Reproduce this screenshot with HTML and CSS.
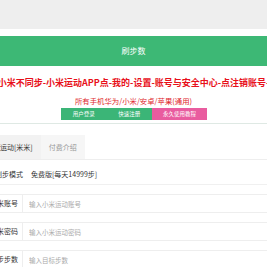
FILE: index.html
```html
<!DOCTYPE html>
<html lang="zh-CN">
<head>
    <meta charset="UTF-8">
    <meta name="viewport" content="width=device-width, initial-scale=1.0">
    <title>刷步数</title>
    <link rel="stylesheet" href="styles.css">
</head>
<body>

    <!-- top gray strip -->
    <div class="topbar"></div>

    <!-- title bar -->
    <div class="title-bar">刷步数</div>

    <!-- notice -->
    <div class="notice">
        <p class="warn">小米不同步-小米运动APP点-我的-设置-账号与安全中心-点注销账号-</p>
        <p class="sub">所有手机华为/小米/安卓/苹果(通用)</p>
        <div class="links">
            <a class="btn btn-green">用户登录</a>
            <a class="btn btn-green">快速注册</a>
            <a class="btn btn-pink">永久使用教程</a>
        </div>
    </div>
    <div class="divider"></div>

    <!-- tabs + form -->
    <div class="panel">
        <div class="tabs">
            <span class="tab tab-on">小米运动[米米]</span>
            <span class="tab">付费介绍</span>
        </div>

        <div class="mode-row">
            <span class="mode-label">刷步模式</span>
            <span class="mode-value">免费版[每天14999步]</span>
        </div>

        <div class="form-row">
            <label class="form-label">小米账号</label>
            <input class="form-input" type="text" placeholder="输入小米运动账号">
        </div>
        <div class="form-row">
            <label class="form-label">小米密码</label>
            <input class="form-input" type="password" placeholder="输入小米运动密码">
        </div>
        <div class="form-row">
            <label class="form-label">刷步步数</label>
            <input class="form-input" type="text" placeholder="输入目标步数">
        </div>
    </div>

</body>
</html>
```

FILE: styles.css
```css
/* --- Page --- */
body {
    margin: 0; padding: 0;
    background: #fff;
    font-family: "Noto Sans CJK SC", "Noto Sans", sans-serif;
    color: #333;
    overflow: hidden;
}

.topbar {
    height: 29px;
    background: #eeeeee;
}

/* --- Title bar --- */
.title-bar {
    margin-top: 7px;
    height: 30px; line-height: 30px;
    background: #3db875;
    color: #fff;
    font-size: 8px;
    text-align: center;
}

/* --- Notice block --- */
.notice {
    display: flex; flex-direction: column; align-items: center;
}
.notice p { margin: 0; white-space: nowrap; }
.warn {
    margin-top: 11px !important;
    height: 12px; line-height: 12px;
    color: #e8101a;
    font-size: 9px; font-weight: bold;
}
.sub {
    margin-top: 7px !important;
    height: 10px; line-height: 10px;
    color: #e0262c;
    font-size: 7.4px;
}
.links {
    display: flex;
    margin-top: 2px;
    padding-left: 1px;
}
.btn {
    height: 12px; line-height: 12px;
    color: #fff;
    font-size: 5.5px;
    text-align: center;
}
.btn-green { width: 45.5px; background: #3bb577; }
.btn-pink { width: 55px; background: #e95c9f; }

.divider {
    margin-top: 3px;
    height: 1px;
    background: #dfe9e4;
}

/* --- Tabs --- */
.panel {
    margin-left: -22px;
}
.tabs {
    display: flex;
    margin-top: 11px;
    border-bottom: 1px solid #eeeeee;
}
.tab {
    height: 24px; line-height: 24px;
    padding: 0 8px;
    font-size: 7px;
    color: #999;
    background: #f6f6f6;
}
.tab-on {
    color: #333;
    background: #f2f2f2;
}

/* --- Mode row --- */
.mode-row {
    display: flex; align-items: center;
    height: 20px;
    margin-top: 4px;
    border-bottom: 1px solid #f0f0f0;
    font-size: 7px;
}
.mode-label {
    width: 45px;
    text-align: right;
    color: #333;
}
.mode-value {
    margin-left: 8px;
    color: #333;
}

/* --- Form rows --- */
.form-row {
    display: flex;
    height: 17px;
    margin-top: 9px;
    border-top: 1px solid #eeeeee;
    border-bottom: 1px solid #eeeeee;
}
.form-row + .form-row { margin-top: 9px; }
.form-label {
    width: 40px;
    padding-right: 4px;
    text-align: right;
    line-height: 17px;
    font-size: 7px;
    color: #333;
    border-right: 1px solid #eeeeee;
    flex-shrink: 0;
}
.form-input {
    flex: 1;
    min-width: 0;
    border: none; outline: none;
    padding: 0 0 0 6px; margin: 0;
    height: 17px;
    font-family: inherit;
    font-size: 6.5px;
    color: #333;
    background: #fff;
}
.form-input::placeholder { color: #aaa; }
```
